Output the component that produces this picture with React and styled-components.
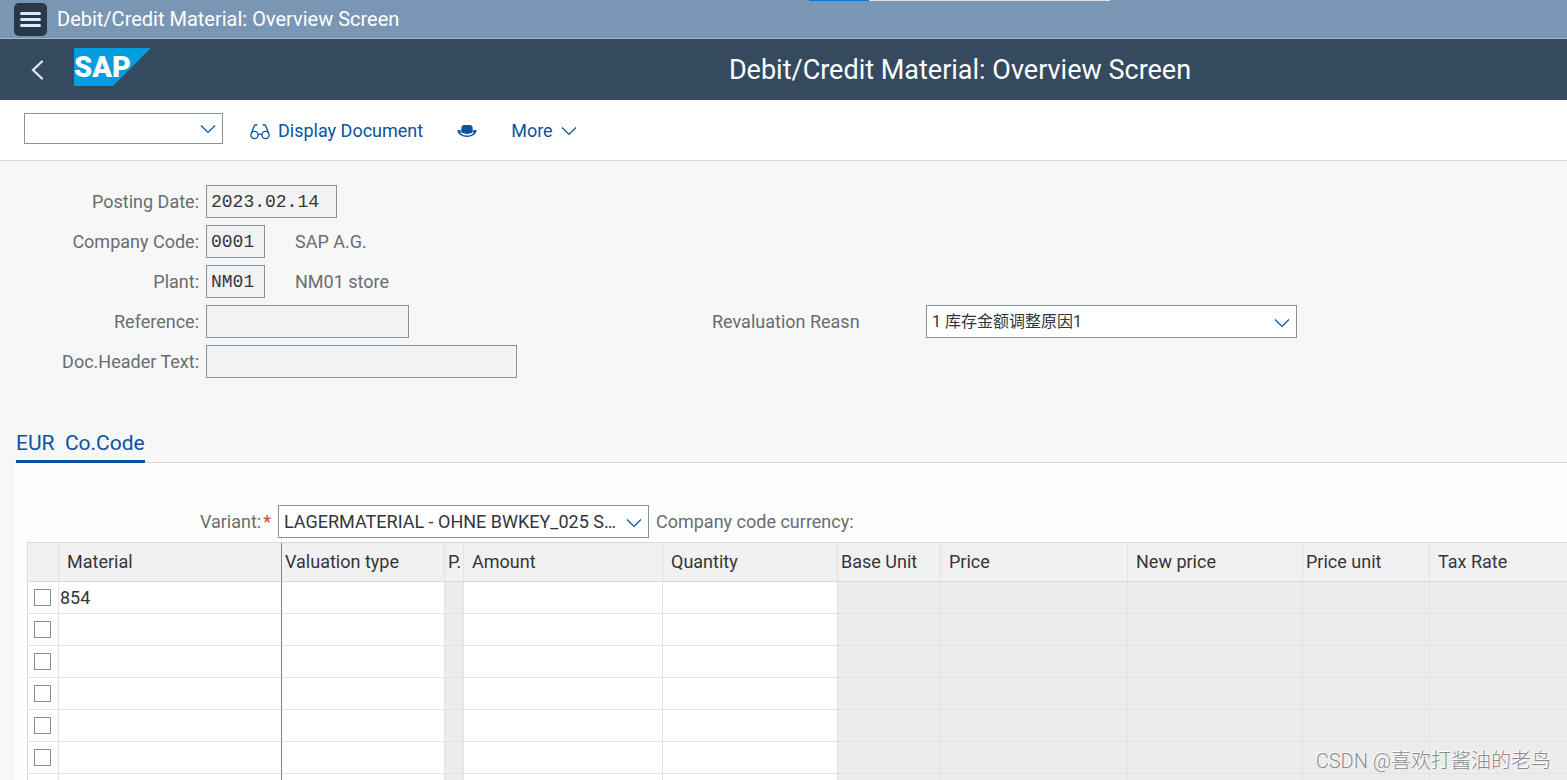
import React from 'react';
import styled, { createGlobalStyle } from 'styled-components';

const sans = 'Roboto, "Noto Sans CJK SC", "Liberation Sans", sans-serif';

const GlobalStyle = createGlobalStyle`
  * { box-sizing: border-box; }
  body {
    margin: 0;
    background: #f7f7f7;
    color: #32363a;
    font-family: ${sans};
    font-size: 18px;
    line-height: 24px;
  }
  button, input, select { font: inherit; color: inherit; margin: 0; }
`;

const Page = styled.div`
  position: relative;
  height: 100vh;
  display: flex;
  flex-direction: column;
  overflow: hidden;
`;

const ShellBar = styled.div`
  flex: none;
  height: 39px;
  display: flex;
  align-items: center;
  gap: 10px;
  padding: 0 14px;
  background: #7996b5;
  border-bottom: 1px solid #a3b7cb;
  color: #fff;
  font-size: 20px;
`;

const MenuButton = styled.button`
  width: 33px;
  height: 33px;
  display: grid;
  place-items: center;
  padding: 0;
  border: 0;
  border-radius: 5px;
  background: #29394a;
`;

const LoadTrack = styled.div`
  position: absolute;
  top: 0;
  left: 809px;
  width: 301px;
  height: 1px;
  background: #e0e0e0;
`;

const LoadFill = styled.div`
  width: 20%;
  height: 1px;
  background: #0078d7;
`;

const TitleBar = styled.header`
  flex: none;
  height: 61px;
  display: flex;
  align-items: center;
  background: #354a5f;
  color: #fff;
`;

const TitleNav = styled.div`
  flex: none;
  width: 353px;
  display: flex;
  align-items: center;
  gap: 24px;
  padding: 0 0 6px 24px;
`;

const BackButton = styled.button`
  width: 26px;
  height: 32px;
  margin-top: 6px;
  display: grid;
  place-items: center;
  padding: 0;
  border: 0;
  background: none;
`;

const Title = styled.h1`
  flex: 1;
  margin: 0;
  text-align: center;
  font-size: 27px;
  line-height: 36px;
  font-weight: 400;
  white-space: nowrap;
`;

const Toolbar = styled.div`
  flex: none;
  height: 61px;
  display: flex;
  align-items: center;
  gap: 27px;
  padding: 0 24px 4px;
  background: #fff;
  border-bottom: 1px solid #d9d9d9;
`;

const ToolButton = styled.button`
  display: flex;
  align-items: center;
  gap: 8px;
  padding: 6px 0 0;
  border: 0;
  background: none;
  color: #0854a0;
  white-space: nowrap;
`;

const HatButton = styled(ToolButton)`
  margin: 0 7px;
`;

const SelectBox = styled.div`
  position: relative;
  flex: none;
  width: ${(p) => p.$width};
  height: ${(p) => p.$height};

  select {
    appearance: none;
    width: 100%;
    height: 100%;
    padding: 0 28px 0 5px;
    border: 1px solid #89919a;
    border-radius: 0;
    background: #fff;
    font-size: ${(p) => p.$fontSize || '18px'};
    line-height: 24px;
  }

  svg {
    position: absolute;
    right: 7px;
    top: 50%;
    margin-top: -4px;
    pointer-events: none;
  }
`;

const Form = styled.form`
  flex: none;
  display: grid;
  grid-template-columns: 199px 506px 221px 1fr;
  row-gap: 7px;
  padding: 24px 0 45px;
  align-items: center;
`;

const Label = styled.label`
  color: #6a6d70;
  white-space: nowrap;
`;

const FieldLabel = styled(Label)`
  grid-column: 1;
  text-align: right;
`;

const Field = styled.div`
  grid-column: 2;
  display: flex;
  align-items: center;
  gap: 30px;
  padding-left: 7px;
  color: #6a6d70;
`;

const TextInput = styled.input`
  width: ${(p) => p.$width};
  height: 33px;
  padding: 0 4px;
  border: 1px solid #89919a;
  background: #f2f2f2;
  color: #32363a;
  font-family: "Liberation Mono", monospace;
`;

const ReasonLabel = styled(Label)`
  grid-column: 3;
  padding-left: 7px;
`;

const TabBar = styled.div`
  flex: none;
  display: flex;
  height: 40px;
  margin-left: 14px;
  padding-left: 2px;
  border-bottom: 1px solid #d9d9d9;
`;

const Tab = styled.button`
  height: 40px;
  padding: 2px 0 0;
  border: 0;
  border-bottom: 3px solid #0854a0;
  background: none;
  color: #0854a0;
  font-size: 21px;
  white-space: pre;
`;

const Panel = styled.section`
  flex: 1;
  margin-left: 14px;
  padding: 42px 0 0 13px;
  background: #fdfdfd;
`;

const VariantRow = styled.div`
  display: flex;
  align-items: center;
  gap: 7px;
  margin-bottom: 4px;
`;

const VariantLabel = styled(Label)`
  width: 244px;
  text-align: right;
`;

const Required = styled.span`
  margin-left: 2px;
  color: #d04343;
`;

const Table = styled.table`
  width: 100%;
  table-layout: fixed;
  border-collapse: separate;
  border-spacing: 0;
  border-left: 1px solid #d9d9d9;
  border-top: 1px solid #d9d9d9;

  th:last-child,
  td:last-child { border-right: 0; }
`;

const Col = styled.col`
  width: ${(p) => p.$width};
`;

const HeadCell = styled.th`
  height: 39px;
  padding: 0 0 0 ${(p) => (p.$tight ? '3px' : '8px')};
  border-right: 1px solid ${(p) => (p.$frozen ? '#7f8388' : '#e3e3e3')};
  border-bottom: 1px solid #d9d9d9;
  background: #f1f1f1;
  text-align: left;
  font-weight: 400;
  white-space: nowrap;
`;

const Cell = styled.td`
  height: 32px;
  padding: 0;
  border-right: 1px solid ${(p) => (p.$frozen ? '#7f8388' : '#e3e3e3')};
  border-bottom: 1px solid #e3e3e3;
  background: ${(p) => (p.$locked ? '#ececec' : '#fff')};
`;

const CellInput = styled.input`
  display: block;
  width: 100%;
  height: 31px;
  padding: 0 1px;
  border: 0;
  background: none;
`;

const RowCheck = styled.input`
  appearance: none;
  display: block;
  width: 17px;
  height: 17px;
  margin: 0 0 0 6px;
  border: 1px solid #89919a;
  background: #fff;
`;

const Watermark = styled.div`
  position: absolute;
  right: 16px;
  bottom: 4px;
  color: #8c8c8c;
  font-family: Roboto, "Noto Sans CJK SC", sans-serif;
  font-size: 20px;
  font-weight: 300;
  line-height: 30px;
  text-shadow: -1px -1px 0 #fff;
`;

const Chevron = () => (
  <svg width="16" height="10" viewBox="0 0 16 10" fill="none" stroke="#0854a0" strokeWidth="1.2" aria-hidden="true">
    <path d="M1 1.5 8 8.5 15 1.5" />
  </svg>
);

const Glasses = () => (
  <svg width="20" height="17" viewBox="0 0 20 17" fill="none" stroke="#0854a0" strokeWidth="1.3" aria-hidden="true">
    <circle cx="4.5" cy="12" r="3.6" />
    <circle cx="15.5" cy="12" r="3.6" />
    <path d="M8 11.8Q10 10.6 12 11.8M1.2 10.8 4.2 3Q5 1 7.4 2.2M18.8 10.8 15.8 3Q15 1 12.6 2.2" />
  </svg>
);

const Hat = () => (
  <svg width="20" height="14" viewBox="0 0 20 14" fill="#0854a0" aria-hidden="true">
    <path d="M4.3 8.6V4.5Q4.3 1 7 1H13Q15.7 1 15.7 4.5V8.6Q10 11.4 4.3 8.6Z" />
    <path d="M3.6 6Q.2 5.6.2 6.8C1.2 10.6 5.5 13 10 13S18.8 10.6 19.8 6.8Q19.8 5.6 16.4 6L16.2 9.4Q13.5 11.6 10 11.6T3.8 9.4Z" />
  </svg>
);

const Logo = () => (
  <svg width="77" height="38" viewBox="0 0 77 38" role="img" aria-label="SAP">
    <path d="M0 0H77L39 38H0Z" fill="#009de0" />
    <text x="0" y="29" fill="#fff" fontFamily="Roboto" fontWeight="900" fontSize="29">SAP</text>
  </svg>
);

const columns = [
  { name: 'Material', width: '223px', frozen: true },
  { name: 'Valuation type', width: '163px', tight: true },
  { name: 'P.', width: '19px', tight: true, locked: true },
  { name: 'Amount', width: '199px' },
  { name: 'Quantity', width: '175px' },
  { name: 'Base Unit', width: '103px', tight: true, locked: true },
  { name: 'Price', width: '187px', locked: true },
  { name: 'New price', width: '175px', locked: true },
  { name: 'Price unit', width: '127px', tight: true, locked: true },
  { name: 'Tax Rate', width: 'auto', locked: true },
];

const rows = ['854', '', '', '', '', '', ''];

const fields = [
  { id: 'posting-date', label: 'Posting Date:', value: '2023.02.14', width: '131px' },
  { id: 'company-code', label: 'Company Code:', value: '0001', width: '59px', note: 'SAP A.G.' },
  { id: 'plant', label: 'Plant:', value: 'NM01', width: '59px', note: 'NM01 store' },
  { id: 'reference', label: 'Reference:', value: '', width: '203px' },
  { id: 'header-text', label: 'Doc.Header Text:', value: '', width: '311px' },
];

export default function App() {
  return (
    <Page>
      <GlobalStyle />
      <ShellBar>
        <MenuButton aria-label="Menu">
          <svg width="21" height="17" viewBox="0 0 21 17" stroke="#d9ecff" strokeWidth="3" strokeLinecap="round" aria-hidden="true">
            <path d="M1.5 2.5H19.5M1.5 8.5H19.5M1.5 14.5H19.5" />
          </svg>
        </MenuButton>
        <span>Debit/Credit Material: Overview Screen</span>
      </ShellBar>
      <LoadTrack><LoadFill /></LoadTrack>

      <TitleBar>
        <TitleNav>
          <BackButton aria-label="Back">
            <svg width="14" height="20" viewBox="0 0 14 20" fill="none" stroke="#d9ecff" strokeWidth="2.2" strokeLinecap="round" aria-hidden="true">
              <path d="M12 1.5 3 10 12 18.5" />
            </svg>
          </BackButton>
          <Logo />
        </TitleNav>
        <Title>Debit/Credit Material: Overview Screen</Title>
      </TitleBar>

      <Toolbar>
        <SelectBox $width="199px" $height="31px">
          <select aria-label="Command"><option></option></select>
          <Chevron />
        </SelectBox>
        <ToolButton><Glasses />Display Document</ToolButton>
        <HatButton aria-label="Services for object"><Hat /></HatButton>
        <ToolButton>More<Chevron /></ToolButton>
      </Toolbar>

      <Form>
        {fields.map((f) => (
          <React.Fragment key={f.id}>
            <FieldLabel htmlFor={f.id}>{f.label}</FieldLabel>
            <Field>
              <TextInput id={f.id} $width={f.width} defaultValue={f.value} readOnly />
              {f.note && <span>{f.note}</span>}
            </Field>
            {f.id === 'reference' && (
              <>
                <ReasonLabel htmlFor="reason">Revaluation Reasn</ReasonLabel>
                <SelectBox $width="371px" $height="33px" $fontSize="16px">
                  <select id="reason"><option>1 库存金额调整原因1</option></select>
                  <Chevron />
                </SelectBox>
              </>
            )}
          </React.Fragment>
        ))}
      </Form>

      <TabBar role="tablist">
        <Tab role="tab" aria-selected="true">{'EUR  Co.Code'}</Tab>
      </TabBar>

      <Panel>
        <VariantRow>
          <VariantLabel htmlFor="variant">Variant:<Required>*</Required></VariantLabel>
          <SelectBox $width="371px" $height="33px">
            <select id="variant"><option>LAGERMATERIAL - OHNE BWKEY_025 S…</option></select>
            <Chevron />
          </SelectBox>
          <Label as="span">Company code currency:</Label>
        </VariantRow>
        <Table>
          <colgroup>
            <Col $width="31px" />
            {columns.map((c) => <Col key={c.name} $width={c.width} />)}
          </colgroup>
          <thead>
            <tr>
              <HeadCell />
              {columns.map((c) => (
                <HeadCell key={c.name} $tight={c.tight} $frozen={c.frozen}>{c.name}</HeadCell>
              ))}
            </tr>
          </thead>
          <tbody>
            {rows.map((material, r) => (
              <tr key={r}>
                <Cell><RowCheck type="checkbox" aria-label={`Select row ${r + 1}`} /></Cell>
                {columns.map((c, i) => (
                  <Cell key={c.name} $locked={c.locked} $frozen={c.frozen}>
                    {!c.locked && (
                      <CellInput aria-label={`${c.name} ${r + 1}`} defaultValue={i === 0 ? material : ''} />
                    )}
                  </Cell>
                ))}
              </tr>
            ))}
          </tbody>
        </Table>
      </Panel>
      <Watermark>CSDN @喜欢打酱油的老鸟</Watermark>
    </Page>
  );
}
